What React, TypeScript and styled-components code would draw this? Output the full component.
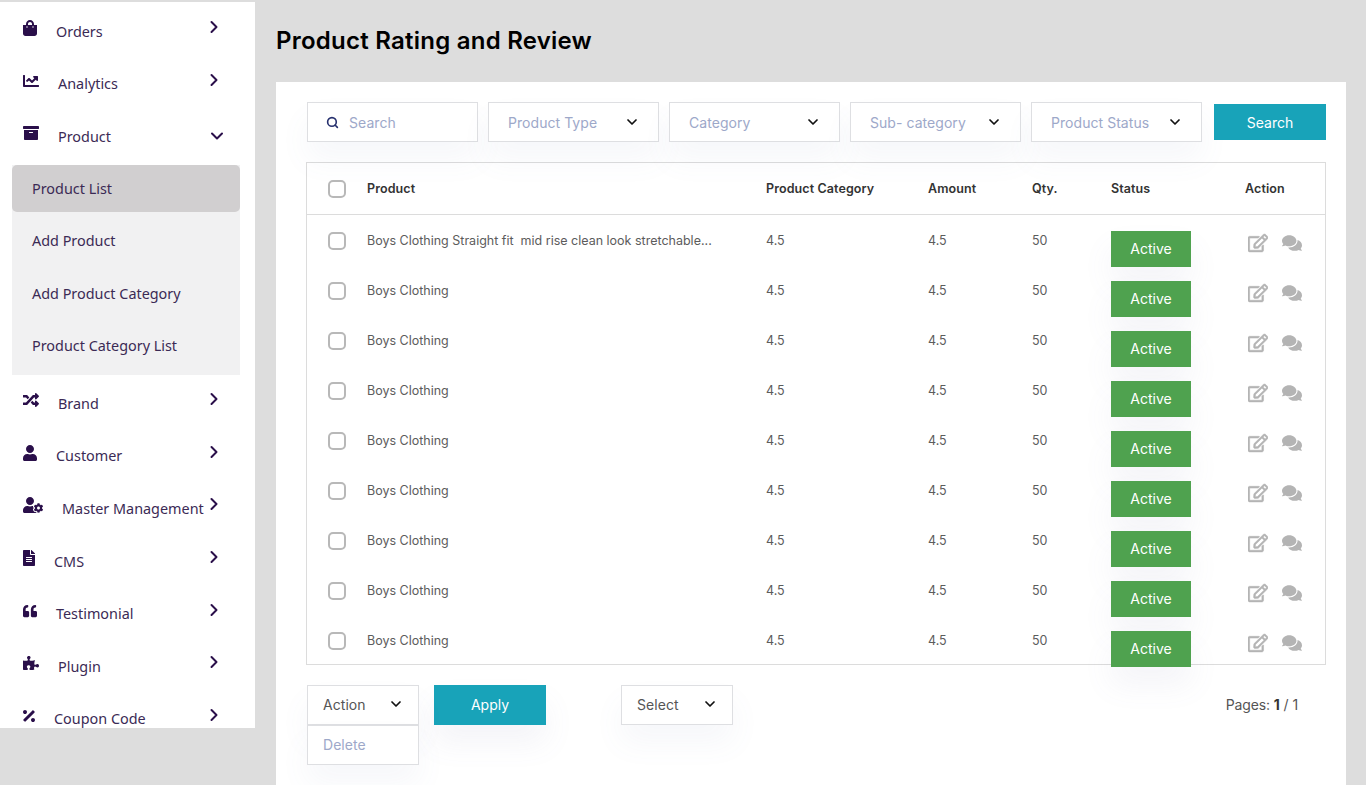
import { ReactNode } from "react";
import styled, { createGlobalStyle } from "styled-components";
import {
  FaShoppingBag,
  FaChartLine,
  FaArchive,
  FaRandom,
  FaUser,
  FaUserCog,
  FaFileAlt,
  FaQuoteLeft,
  FaPuzzlePiece,
  FaPercentage,
  FaRegEdit,
  FaComments,
} from "react-icons/fa";
import { FiChevronDown, FiChevronRight, FiSearch } from "react-icons/fi";

const GlobalStyle = createGlobalStyle`
  html, body {
    margin: 0;
    height: 785px;
    overflow: hidden;
    background: #dddddd;
  }
  * { box-sizing: border-box; }
`;

const topMenu = [
  { label: "Orders", icon: <FaShoppingBag />, width: 14 },
  { label: "Analytics", icon: <FaChartLine />, width: 16 },
];

const bottomMenu = [
  { label: "Brand", icon: <FaRandom />, width: 16 },
  { label: "Customer", icon: <FaUser />, width: 14 },
  { label: "Master Management", icon: <FaUserCog />, width: 20 },
  { label: "CMS", icon: <FaFileAlt />, width: 12 },
  { label: "Testimonial", icon: <FaQuoteLeft />, width: 14 },
  { label: "Plugin", icon: <FaPuzzlePiece />, width: 16 },
  { label: "Coupon Code", icon: <FaPercentage />, width: 12 },
];

const subMenu = ["Product List", "Add Product", "Add Product Category", "Product Category List"];

const filters = ["Product Type", "Category", "Sub- category", "Product Status"];

const rows = [
  "Boys Clothing Straight fit  mid rise clean look stretchable...",
  ...Array(8).fill("Boys Clothing"),
];

type MenuRowProps = { icon: ReactNode; label: string; width: number; open?: boolean };

const MenuRow = ({ icon, label, width, open }: MenuRowProps) => (
  <MenuItem>
    <MenuIcon $width={width}>{icon}</MenuIcon>
    <MenuLabel>{label}</MenuLabel>
    {open ? (
      <DownArrow>
        <FiChevronDown />
      </DownArrow>
    ) : (
      <RightArrow>
        <FiChevronRight />
      </RightArrow>
    )}
  </MenuItem>
);

const App = () => {
  return (
    <>
      <GlobalStyle />
      <Page>
        <Sidebar>
          {topMenu.map((m) => (
            <MenuRow key={m.label} {...m} />
          ))}
          <MenuRow icon={<FaArchive />} label="Product" width={16} open />
          <SubList>
            {subMenu.map((s, i) => (
              <SubItem key={s} $active={i === 0}>
                {s}
              </SubItem>
            ))}
          </SubList>
          {bottomMenu.map((m) => (
            <MenuRow key={m.label} {...m} />
          ))}
        </Sidebar>
        <Main>
          <Title>Product Rating and Review</Title>
          <Card>
            <Toolbar>
              <SearchBox>
                <FiSearch />
                <span>Search</span>
              </SearchBox>
              {filters.map((f) => (
                <FilterSelect key={f}>
                  <span>{f}</span>
                  <FiChevronDown />
                </FilterSelect>
              ))}
              <SearchButton>Search</SearchButton>
            </Toolbar>
            <Table>
              <HeadRow>
                <CheckCell>
                  <CheckBox />
                </CheckCell>
                <span>Product</span>
                <span>Product Category</span>
                <span>Amount</span>
                <span>Qty.</span>
                <span>Status</span>
                <span>Action</span>
              </HeadRow>
              {rows.map((name, i) => (
                <BodyRow key={i}>
                  <CheckCell>
                    <CheckBox />
                  </CheckCell>
                  <Cell>{name}</Cell>
                  <Cell>4.5</Cell>
                  <Cell>4.5</Cell>
                  <Cell>50</Cell>
                  <StatusBadge>Active</StatusBadge>
                  <Actions>
                    <FaRegEdit />
                    <FaComments />
                  </Actions>
                </BodyRow>
              ))}
            </Table>
            <Footer>
              <ActionWrap>
                <SmallSelect>
                  <span>Action</span>
                  <FiChevronDown />
                </SmallSelect>
                <DropMenu>Delete</DropMenu>
              </ActionWrap>
              <ApplyButton>Apply</ApplyButton>
              <SmallSelect>
                <span>Select</span>
                <FiChevronDown />
              </SmallSelect>
              <Pages>
                Pages: <b>1</b> / 1
              </Pages>
            </Footer>
          </Card>
        </Main>
      </Page>
    </>
  );
};

export default App;

const Page = styled.div`
  display: flex;
  align-items: flex-start;
  height: 785px;
  overflow: hidden;
`;

const Sidebar = styled.nav`
  width: 255px;
  height: 726px;
  margin-top: 2px;
  flex: none;
  overflow: hidden;
  background: #fff;
  font-family: "Noto Sans", sans-serif;
  font-size: 14.4px;
  color: #3b2a55;
`;

const MenuItem = styled.div`
  display: flex;
  align-items: flex-start;
  height: 52.6px;
  padding: 18px 31px 0 23px;
`;

const MenuIcon = styled.span<{ $width: number }>`
  display: block;
  flex: none;
  width: ${(p) => p.$width}px;
  margin-right: 19px;
  color: #2a0f4a;
  svg {
    display: block;
    width: 100%;
    height: 16px;
  }
`;

const MenuLabel = styled.span`
  line-height: 20px;
  margin-top: 1.5px;
  white-space: nowrap;
`;

const RightArrow = styled.span`
  display: flex;
  margin: -3px 0 0 auto;
  color: #2a0f4a;
  svg {
    width: 20px;
    height: 20px;
    stroke-width: 2.4;
  }
`;

const DownArrow = styled(RightArrow)`
  margin: 1px -3px 0 auto;
`;

const SubList = styled.div`
  width: 228px;
  margin: 5px 0 -1px 12px;
  padding-bottom: 4px;
  background: #f1f1f2;
`;

const SubItem = styled.div<{ $active?: boolean }>`
  height: ${(p) => (p.$active ? "47px" : "52.5px")};
  margin-bottom: ${(p) => (p.$active ? "2px" : "0")};
  padding: 1px 0 0 20px;
  display: flex;
  align-items: center;
  border-radius: ${(p) => (p.$active ? "5px" : "0")};
  background: ${(p) => (p.$active ? "#d1cfd0" : "transparent")};
`;

const Main = styled.main`
  flex: 1;
  padding: 0 20px 0 21px;
  font-family: "Inter", sans-serif;
`;

const Title = styled.h1`
  margin: 0;
  height: 82px;
  padding-top: 25px;
  font-size: 24px;
  line-height: 32px;
  font-weight: 600;
  letter-spacing: 0.24px;
  color: #000;
`;

const Card = styled.section`
  background: #fff;
  height: 720px;
  padding: 20px 20px 0 30px;
`;

const Toolbar = styled.div`
  display: flex;
  align-items: center;
  gap: 10px;
  height: 40px;
  margin: 0 0 20px 1px;
`;

const Box = styled.div`
  display: flex;
  align-items: center;
  justify-content: space-between;
  background: #fff;
  border: 1px solid #dedfe2;
  box-shadow: 0 18px 30px rgba(110, 120, 170, 0.06);
  font-size: 14px;
  letter-spacing: 0.05px;
`;

const SearchBox = styled(Box)`
  width: 171px;
  height: 40px;
  justify-content: flex-start;
  gap: 10px;
  padding-left: 18px;
  color: #9da8c9;
  svg {
    width: 13px;
    height: 13px;
    color: #26306e;
    stroke-width: 3;
  }
`;

const FilterSelect = styled(Box)`
  width: 171px;
  height: 40px;
  padding: 0 18px 0 19px;
  color: #9da8c9;
  svg {
    width: 16px;
    height: 16px;
    color: #111;
    stroke-width: 2.6;
  }
`;

const SearchButton = styled.button`
  width: 112px;
  height: 36px;
  margin-left: 2px;
  border: 0;
  background: #18a3b9;
  color: #fff;
  font: 400 14px "Inter", sans-serif;
`;

const Table = styled.div`
  width: 1020px;
  height: 503px;
  border: 1px solid #dcdcdc;
`;

const columns = "60px 399px 162px 104px 79px 134px 1fr";

const HeadRow = styled.div`
  display: grid;
  grid-template-columns: ${columns};
  align-items: center;
  height: 52px;
  border-bottom: 1px solid #dcdcdc;
  font-size: 12.5px;
  font-weight: 600;
  letter-spacing: 0.1px;
  color: #333;
`;

const BodyRow = styled.div`
  display: grid;
  grid-template-columns: ${columns};
  align-items: flex-start;
  height: 50px;
  font-size: 12.5px;
  color: #5c5c5c;
`;

const CheckCell = styled.div`
  display: flex;
  padding-left: 21px;
`;

const CheckBox = styled.span`
  display: block;
  width: 18px;
  height: 18px;
  border: 2px solid #b8b8b8;
  border-radius: 5px;
  background: #fff;
  ${BodyRow} & {
    margin-top: 17px;
  }
`;

const Cell = styled.div`
  margin-top: 16.5px;
  line-height: 18px;
  white-space: pre;
`;

const StatusBadge = styled.div`
  width: 80px;
  height: 36px;
  margin-top: 16px;
  padding-bottom: 2px;
  display: flex;
  align-items: center;
  justify-content: center;
  background: #4fa24f;
  color: #fff;
  font-size: 14px;
  font-weight: 400;
  box-shadow: 0 18px 30px rgba(110, 120, 170, 0.08);
`;

const Actions = styled.div`
  display: flex;
  align-items: center;
  gap: 14px;
  margin: 18px 0 0 3px;
  color: #b4b4b4;
  svg {
    width: 20px;
    height: 20px;
  }
  svg:first-child {
    stroke: currentColor;
    stroke-width: 16px;
  }
`;

const Footer = styled.div`
  display: flex;
  align-items: center;
  height: 40px;
  margin: 20px 0 0 1px;
`;

const ActionWrap = styled.div`
  position: relative;
`;

const SmallSelect = styled(Box)`
  width: 112px;
  height: 40px;
  padding: 0 14px 2px 15px;
  color: #555;
  svg {
    width: 16px;
    height: 16px;
    color: #111;
    stroke-width: 2.6;
  }
`;

const DropMenu = styled(Box)`
  position: absolute;
  top: 40px;
  left: 0;
  width: 112px;
  height: 40px;
  padding: 0 0 2px 15px;
  color: #9da8c9;
`;

const ApplyButton = styled.button`
  width: 112px;
  height: 40px;
  margin: 0 75px 0 15px;
  padding-bottom: 2px;
  border: 0;
  background: #18a3b9;
  color: #fff;
  font: 400 14px "Inter", sans-serif;
  box-shadow: 0 18px 30px rgba(110, 120, 170, 0.08);
`;

const Pages = styled.div`
  margin: 0 28px 0 auto;
  padding-bottom: 2px;
  font-size: 14px;
  letter-spacing: -0.1px;
  color: #555;
  b {
    color: #333;
    font-weight: 700;
  }
`;
